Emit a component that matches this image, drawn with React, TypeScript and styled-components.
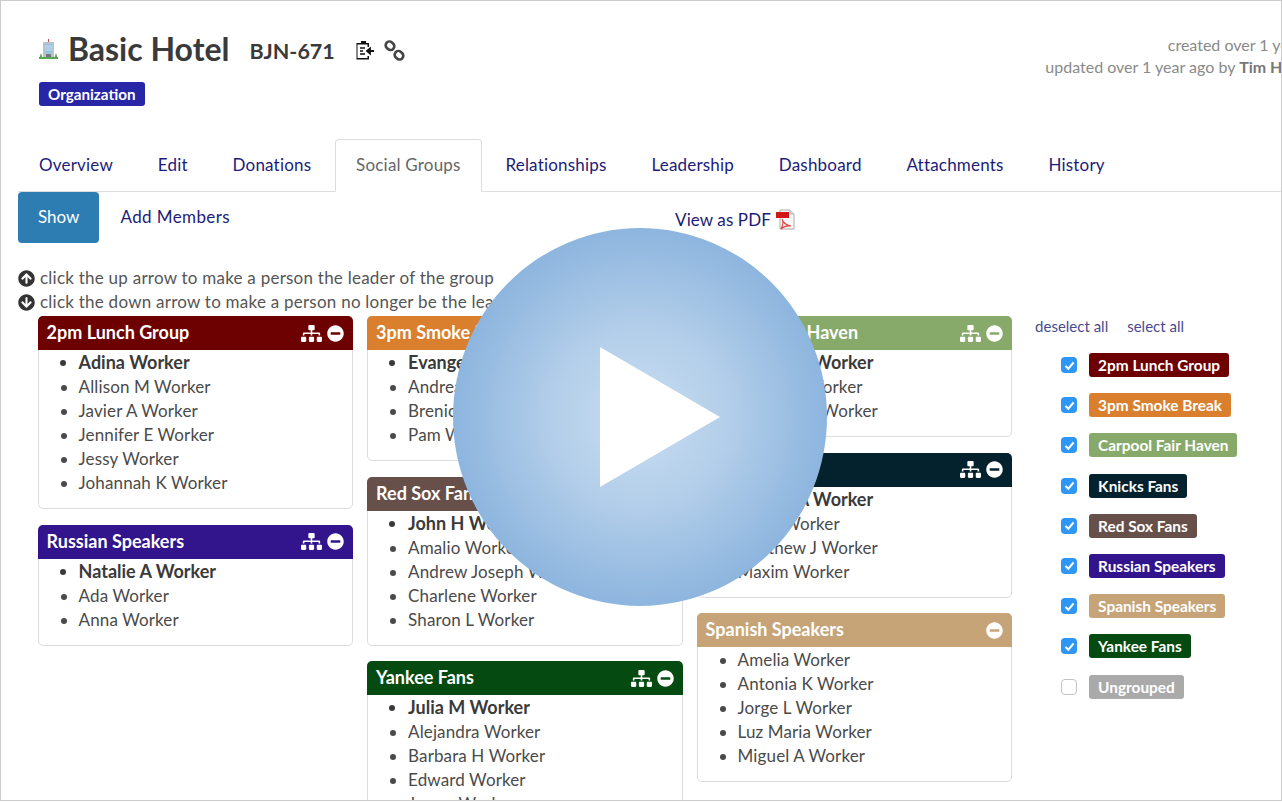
import { createGlobalStyle } from 'styled-components'
import styled from 'styled-components'
import { FaSitemap, FaMinusCircle, FaArrowCircleUp, FaArrowCircleDown } from 'react-icons/fa'

const GlobalStyle = createGlobalStyle`
    html, body {
        margin: 0;
        padding: 0;
        background: #fff;
    }
    body {
        font-family: "Lato", "Open Sans", sans-serif;
        color: #444;
    }
`

const Frame = styled.div`
    box-sizing: border-box;
    width: 1282px;
    height: 801px;
    border: 1px solid #ccc;
    overflow: hidden;
    position: relative;
    background: #fff;
`

const Header = styled.header`
    display: flex;
    justify-content: space-between;
    align-items: flex-start;
    height: 138px;
    padding: 30px 0 0 38px;
    box-sizing: border-box;
`

const TitleBlock = styled.div`
    display: flex;
    flex-direction: column;
    gap: 15px;
    align-items: flex-start;
`

const TitleRow = styled.div`
    display: flex;
    align-items: center;
    height: 36px;
`

const Title = styled.h1`
    margin: 0 0 0 10px;
    font-size: 32px;
    line-height: 36px;
    font-weight: 700;
    color: #3a3a3a;
`

const Code = styled.span`
    margin-left: 20px;
    font-size: 21.5px;
    font-weight: 700;
    color: #3a3a3a;
    position: relative;
    top: 2px;
`

const TitleIcon = styled.svg<{ $gap: number }>`
    margin-left: ${p => p.$gap}px;
    flex: none;
    position: relative;
    top: 1px;
`

const TypeBadge = styled.span`
    display: inline-block;
    background: #2626a6;
    color: #fff;
    font-size: 15.2px;
    font-weight: 700;
    line-height: 24px;
    padding: 0 9px;
    border-radius: 3px;
`

const Meta = styled.div`
    margin: 3px -50.5px 0 0;
    text-align: right;
    font-size: 16px;
    line-height: 22px;
    color: #8a8a8a;
    white-space: nowrap;

    b {
        font-weight: 700;
        color: #777;
    }
`

const Tabs = styled.nav`
    display: flex;
    gap: 2.8px;
    margin-left: 17px;
    height: 53px;
    box-sizing: border-box;
    border-bottom: 1px solid #ddd;
`

const Tab = styled.a<{ $active?: boolean }>`
    box-sizing: border-box;
    height: 53px;
    line-height: 50px;
    padding: 0 20px;
    font-size: 17px;
    letter-spacing: 0.2px;
    border: 1px solid ${p => (p.$active ? '#ddd' : 'transparent')};
    border-bottom-color: ${p => (p.$active ? '#fff' : 'transparent')};
    border-radius: 4px 4px 0 0;
    color: ${p => (p.$active ? '#666' : '#1c1c78')};
    background: ${p => (p.$active ? '#fff' : 'transparent')};
`

const PillRow = styled.div`
    display: flex;
    align-items: flex-start;
    margin-left: 17px;
    height: 52px;
    position: relative;
`

const Pill = styled.a<{ $active?: boolean }>`
    box-sizing: border-box;
    height: 51px;
    line-height: 49px;
    padding: 0 20px;
    margin-left: ${p => (p.$active ? '0' : '1px')};
    margin-right: ${p => (p.$active ? '0' : '425px')};
    font-size: 17px;
    letter-spacing: ${p => (p.$active ? '0' : '0.4px')};
    border-radius: 4px;
    color: ${p => (p.$active ? '#fff' : '#1c1c78')};
    background: ${p => (p.$active ? '#2d7db3' : 'transparent')};
`

const PdfLink = styled.a`
    display: flex;
    align-items: center;
    gap: 4px;
    height: 20px;
    margin-top: 17px;
    font-size: 17px;
    letter-spacing: 0.1px;
    color: #1c1c78;
`

const Hints = styled.div`
    margin: 22px 0 0 17px;
    font-size: 17px;
    letter-spacing: 0.24px;
    line-height: 24px;
    color: #555;
`

const Hint = styled.div`
    display: flex;
    align-items: center;
    gap: 5px;
    white-space: nowrap;

    svg {
        color: #333;
        flex: none;
    }
`

const Board = styled.div`
    display: flex;
    align-items: flex-start;
    margin: 2px 0 0 36.6px;
`

const Column = styled.div`
    flex: none;
    width: 315.5px;
    margin-right: 14px;
    display: flex;
    flex-direction: column;
    gap: 15.5px;
`

const Card = styled.section`
    box-sizing: border-box;
    border: 1px solid #ddd;
    border-radius: 5px;
    padding-bottom: 13px;
    background: #fff;
    flex: none;
`

const CardHead = styled.div<{ $color: string }>`
    display: flex;
    align-items: center;
    height: 34px;
    margin: -1px -1px 0;
    padding: 0 9px;
    border-radius: 5px 5px 0 0;
    background: ${p => p.$color};
    color: #fff;
    font-size: 18px;
    font-weight: 700;
`

const CardName = styled.span`
    flex: 1;
    white-space: nowrap;
    position: relative;
    top: -1px;
`

const CardTools = styled.span`
    display: flex;
    align-items: center;
    gap: 5px;
`

const People = styled.ul`
    margin: 0;
    padding: 1px 0 0 40px;
    font-size: 17px;
    line-height: 24px;
`

const Person = styled.li<{ $lead?: boolean }>`
    position: relative;
    top: ${p => (p.$lead ? '-1px' : '0')};
    font-weight: ${p => (p.$lead ? 700 : 400)};
    font-size: ${p => (p.$lead ? '18px' : '17px')};
    letter-spacing: ${p => (p.$lead ? '0' : '0.12px')};
    color: ${p => (p.$lead ? '#3a3a3a' : '#4a4a4a')};
    white-space: nowrap;
`

const Filters = styled.aside`
    flex: none;
    width: 240px;
    margin-left: 9px;
`

const FilterLinks = styled.div`
    display: flex;
    gap: 19px;
    height: 20px;
    line-height: 20px;
    font-size: 15px;
    color: #4a4a8e;
`

const FilterList = styled.div`
    margin: 14px 0 0 26px;
    display: flex;
    flex-direction: column;
    gap: 10.2px;
`

const FilterRow = styled.label`
    display: flex;
    align-items: center;
    height: 30px;
    gap: 12px;
`

const Check = styled.span<{ $on: boolean }>`
    box-sizing: border-box;
    width: 16px;
    height: 16px;
    border-radius: 4px;
    display: flex;
    align-items: center;
    justify-content: center;
    background: ${p => (p.$on ? '#2e96f5' : '#fff')};
    border: ${p => (p.$on ? 'none' : '1px solid #c4c4c4')};
`

const GroupTag = styled.span<{ $color: string }>`
    background: ${p => p.$color};
    color: #fff;
    font-size: 15.4px;
    font-weight: 700;
    line-height: 24px;
    padding: 0 9px;
    border-radius: 3px;
    white-space: nowrap;
`

const PlayOverlay = styled.div`
    box-sizing: border-box;
    position: absolute;
    left: 452px;
    top: 227px;
    width: 374px;
    height: 378px;
    padding-left: 39px;
    border-radius: 50%;
    background: radial-gradient(closest-side, #c8dcf1 0%, #b4cfea 45%, #8db5de 100%);
    display: flex;
    align-items: center;
    justify-content: center;
`

type Group = { name: string; color: string; people: string[]; lead?: boolean }

const groups: Record<string, Group> = {
    lunch: { name: '2pm Lunch Group', color: '#6d0000', lead: true, people: ['Adina Worker', 'Allison M Worker', 'Javier A Worker', 'Jennifer E Worker', 'Jessy Worker', 'Johannah K Worker'] },
    russian: { name: 'Russian Speakers', color: '#32148c', lead: true, people: ['Natalie A Worker', 'Ada Worker', 'Anna Worker'] },
    smoke: { name: '3pm Smoke Break', color: '#d97f2e', lead: true, people: ['Evangelina Worker', 'Andrea Worker', 'Brenice Worker', 'Pam Worker'] },
    redsox: { name: 'Red Sox Fans', color: '#68504a', lead: true, people: ['John H Worker', 'Amalio Worker', 'Andrew Joseph Worker', 'Charlene Worker', 'Sharon L Worker'] },
    yankee: { name: 'Yankee Fans', color: '#054a10', lead: true, people: ['Julia M Worker', 'Alejandra Worker', 'Barbara H Worker', 'Edward Worker', 'James Worker'] },
    carpool: { name: 'Carpool Fair Haven', color: '#87aa6a', lead: true, people: ['Andrea L Worker', 'Diana M Worker', 'Carmen M Worker'] },
    knicks: { name: 'Knicks Fans', color: '#04222e', lead: true, people: ['Ronald A Worker', 'Sonia Worker', 'Matthew J Worker', 'Maxim Worker'] },
    spanish: { name: 'Spanish Speakers', color: '#c6a478', people: ['Amelia Worker', 'Antonia K Worker', 'Jorge L Worker', 'Luz Maria Worker', 'Miguel A Worker'] },
}

const columns = [
    ['lunch', 'russian'],
    ['smoke', 'redsox', 'yankee'],
    ['carpool', 'knicks', 'spanish'],
]

const filters = [
    ...['lunch', 'smoke', 'carpool', 'knicks', 'redsox', 'russian', 'spanish', 'yankee'].map(k => ({
        name: groups[k].name,
        color: groups[k].color,
        on: true,
    })),
    { name: 'Ungrouped', color: '#aaaaaa', on: false },
]

const tabs = ['Overview', 'Edit', 'Donations', 'Social Groups', 'Relationships', 'Leadership', 'Dashboard', 'Attachments', 'History']

function BuildingIcon() {
    return (
        <svg width="19" height="21" viewBox="0 0 19 21">
            <rect x="9" y="0" width="1" height="4" fill="#c0504d" />
            <rect x="4" y="3" width="11" height="15" fill="#b9c3c9" />
            <rect x="6" y="5" width="7" height="9" fill="#8fc3e8" />
            <path d="M6 7h7M6 9h7M6 11h7" stroke="#dfeaf2" strokeWidth="0.7" />
            <rect x="7" y="15" width="5" height="3" fill="#6f7b80" />
            <path d="M0 20 L2 14 L4 20 Z M15 20 L17 14 L19 20 Z" fill="#58a458" />
            <rect x="0" y="18" width="19" height="2" fill="#58a458" />
        </svg>
    )
}

function PdfIcon() {
    return (
        <svg width="21" height="21" viewBox="0 0 21 21">
            <path d="M5 1h10l4 4v15H5z" fill="#fafafa" stroke="#aaa" strokeWidth="1" />
            <path d="M15 1v4h4" fill="#ddd" stroke="#aaa" strokeWidth="0.8" />
            <rect x="1" y="3" width="13" height="6" fill="#d01818" />
            <path d="M7 10c1 4 3 6 9 7-4-.5-7 0-10 3 2-4 3-7 1-10z" fill="none" stroke="#e04040" strokeWidth="1.1" />
        </svg>
    )
}

function GroupCard({ group }: { group: Group }) {
    return (
        <Card>
            <CardHead $color={group.color}>
                <CardName>{group.name}</CardName>
                <CardTools>
                    {group.lead && <FaSitemap size={21} />}
                    <FaMinusCircle size={17} />
                </CardTools>
            </CardHead>
            <People>
                {group.people.map((p, i) => (
                    <Person key={p} $lead={group.lead && i === 0}>{p}</Person>
                ))}
            </People>
        </Card>
    )
}

export default function App() {
    return (
        <>
            <GlobalStyle />
            <Frame>
                <Header>
                    <TitleBlock>
                        <TitleRow>
                            <BuildingIcon />
                            <Title>Basic Hotel</Title>
                            <Code>BJN-671</Code>
                            <TitleIcon $gap={19} width="20" height="20" viewBox="0 0 20 20">
                                <path d="M4 3h3V1h5v2h3v4h-1.5V4.5h-10v13.5h10V16H15v3.5H2.5V3z" fill="#111" />
                                <path d="M6 8h5M6 11h3M6 14h5" stroke="#111" strokeWidth="1.4" />
                                <path d="M20 11h-6M16 8.5 13 11l3 2.5z" stroke="#111" strokeWidth="1.8" fill="#111" />
                            </TitleIcon>
                            <TitleIcon $gap={10} width="21" height="21" viewBox="0 0 21 21">
                                <g fill="none" stroke="#444" strokeWidth="2.6">
                                    <rect x="1.5" y="2" width="9" height="7.5" rx="3.7" transform="rotate(42 6 5.7)" />
                                    <rect x="10.5" y="11.5" width="9" height="7.5" rx="3.7" transform="rotate(42 15 15.2)" />
                                </g>
                            </TitleIcon>
                        </TitleRow>
                        <TypeBadge>Organization</TypeBadge>
                    </TitleBlock>
                    <Meta>
                        <div>created over 1 year ago</div>
                        <div>updated over 1 year ago by <b>Tim Harrison</b></div>
                    </Meta>
                </Header>
                <Tabs>
                    {tabs.map(t => (
                        <Tab key={t} $active={t === 'Social Groups'}>{t}</Tab>
                    ))}
                </Tabs>
                <PillRow>
                    <Pill $active>Show</Pill>
                    <Pill>Add Members</Pill>
                    <PdfLink>View as PDF <PdfIcon /></PdfLink>
                </PillRow>
                <Hints>
                    <Hint><FaArrowCircleUp size={17} /> click the up arrow to make a person the leader of the group</Hint>
                    <Hint><FaArrowCircleDown size={17} /> click the down arrow to make a person no longer be the leader of the group</Hint>
                </Hints>
                <Board>
                    {columns.map(col => (
                        <Column key={col[0]}>
                            {col.map(k => <GroupCard key={k} group={groups[k]} />)}
                        </Column>
                    ))}
                    <Filters>
                        <FilterLinks>
                            <span>deselect all</span>
                            <span>select all</span>
                        </FilterLinks>
                        <FilterList>
                            {filters.map(f => (
                                <FilterRow key={f.name}>
                                    <Check $on={f.on}>
                                        {f.on && (
                                            <svg width="11" height="11" viewBox="0 0 11 11">
                                                <path d="M1.5 6 4.3 8.8 9.5 2.5" fill="none" stroke="#fff" strokeWidth="2" />
                                            </svg>
                                        )}
                                    </Check>
                                    <GroupTag $color={f.color}>{f.name}</GroupTag>
                                </FilterRow>
                            ))}
                        </FilterList>
                    </Filters>
                </Board>
                <PlayOverlay>
                    <svg width="120" height="140" viewBox="0 0 120 140">
                        <path d="M0 0 120 70 0 140z" fill="#fff" />
                    </svg>
                </PlayOverlay>
            </Frame>
        </>
    )
}
